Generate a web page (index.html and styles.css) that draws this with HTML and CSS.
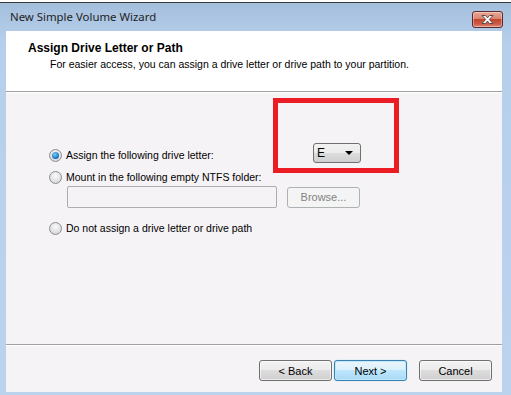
FILE: index.html
```html
<!DOCTYPE html>
<html lang="en">
<head>
  <meta charset="UTF-8">
  <meta name="viewport" content="width=device-width, initial-scale=1.0">
  <title>New Simple Volume Wizard</title>
  <link rel="stylesheet" href="styles.css">
</head>
<body>
  <div class="edge"></div>
  <div class="window">
    <div class="titlebar">
      <span class="title">New Simple Volume Wizard</span>
      <span class="close">
        <svg width="17" height="11" viewBox="0 0 17 11">
          <path d="M3 1.5h3.5l2 2.4 2-2.4H14l-3.7 4 3.7 4h-3.5l-2-2.4-2 2.4H3l3.7-4z" fill="#fff" stroke="#5a4a4a" stroke-width="1"/>
        </svg>
      </span>
    </div>
    <div class="client">
      <div class="header">
        <h1>Assign Drive Letter or Path</h1>
        <p>For easier access, you can assign a drive letter or drive path to your partition.</p>
      </div>
      <div class="body">
        <div class="row row-first">
          <label class="opt"><span class="radio checked"></span>Assign the following drive letter:</label>
          <div class="combo"><span>E</span><span class="arrow"></span></div>
        </div>
        <div class="row row-mount">
          <label class="opt"><span class="radio"></span>Mount in the following empty NTFS folder:</label>
        </div>
        <div class="row row-path">
          <div class="path"></div>
          <button class="btn" disabled>Browse...</button>
        </div>
        <div class="row row-none">
          <label class="opt"><span class="radio"></span>Do not assign a drive letter or drive path</label>
        </div>
        <div class="mark"></div>
      </div>
      <div class="footer">
        <button class="btn">&lt; Back</button>
        <button class="btn default">Next &gt;</button>
        <button class="btn cancel">Cancel</button>
      </div>
    </div>
  </div>
</body>
</html>
```

FILE: styles.css
```css
*{
  margin: 0;
  padding: 0;
  box-sizing: border-box;
}
body{
  width: 511px;
  height: 395px;
  overflow: hidden;
  background: #fff;
  font-family: "Liberation Sans", Arial, sans-serif;
  font-size: 10.5px;
  color: #000;
}
.edge{
  height: 4px;
  margin-top: -1px;
  background: #fff;
  border-bottom: 1px solid #3a3a3a;
}
.window{
  height: 392px;
  background: linear-gradient(#a4bfdd, #b6cfeb 40px, #bcd3ee);
  padding: 0 9px 3px 6px;
  display: flex;
  flex-direction: column;
}
.titlebar{
  height: 28px;
  display: flex;
  align-items: flex-start;
  justify-content: space-between;
}
.title{
  font-family: "Noto Sans", sans-serif;
  font-size: 11.4px;
  margin: 6px 0 0 4px;
  color: #1e1e1e;
}
.close{
  width: 31px;
  height: 17px;
  margin: 8px -1px 0 0;
  border: 1px solid #5b2a2e;
  border-radius: 3px;
  background: linear-gradient(#e8a897, #d9846f 45%, #c4462f 50%, #cc5a44 80%, #dc8e7a);
  display: flex;
  align-items: center;
  justify-content: center;
  box-shadow: inset 0 0 0 1px rgba(255,255,255,0.35);
}
.client{
  flex: 1;
  background: #f6f3f6;
  display: flex;
  flex-direction: column;
}
.header{
  height: 61px;
  background: #fff;
  border-bottom: 1px solid #a0a0a0;
  padding: 10px 0 0 22px;
  box-shadow: 0 1px 0 #fff;
}
.header h1{
  font-size: 12px;
  font-weight: bold;
  line-height: 14px;
}
.header p{
  margin: 2px 0 0 22px;
  line-height: 14px;
}
.body{
  position: relative;
  flex: 1;
  padding: 53px 0 0 43px;
  border-bottom: 1px solid #a0a0a0;
}
.row{
  display: flex;
  align-items: center;
}
.opt{
  display: flex;
  align-items: center;
  height: 20px;
}
.row-first .opt{
  width: 264px;
}
.row-mount{
  margin-top: 3px;
}
.row-mount .opt{
  height: 18px;
}
.row-path{
  padding-left: 18px;
}
.row-none{
  margin-top: 10px;
}
.radio{
  width: 13px;
  height: 13px;
  border-radius: 50%;
  border: 1px solid #8b8e92;
  background: radial-gradient(circle at 50% 35%, #fafafa, #e0e0e0 60%, #cfcfcf);
  margin-right: 4px;
  display: flex;
  align-items: center;
  justify-content: center;
}
.radio.checked::after{
  content: "";
  width: 7px;
  height: 7px;
  border-radius: 50%;
  background: radial-gradient(circle at 40% 35%, #7fd0f8, #1c7ac4 60%, #0c4f93);
}
.combo{
  width: 48px;
  height: 20px;
  margin-top: -4px;
  border: 1px solid #707070;
  border-radius: 3px;
  background: linear-gradient(#f2f2f2, #ebebeb 50%, #dddddd 50%, #cfcfcf);
  display: flex;
  align-items: center;
  justify-content: space-between;
  padding: 0 7px 0 3px;
  font-size: 12px;
}
.arrow{
  width: 0;
  height: 0;
  border-left: 4px solid transparent;
  border-right: 4px solid transparent;
  border-top: 4px solid #000;
}
.path{
  width: 210px;
  height: 22px;
  border: 1px solid #abadb3;
  border-radius: 2px;
  background: #f6f3f6;
}
.btn{
  width: 73px;
  height: 21px;
  border: 1px solid #707070;
  border-radius: 3px;
  background: linear-gradient(#f2f2f2, #ebebeb 50%, #dddddd 50%, #cfcfcf);
  font-family: "Liberation Sans", Arial, sans-serif;
  font-size: 11px;
  color: #000;
  box-shadow: inset 0 0 0 1px rgba(255,255,255,0.6);
}
.row-path .btn{
  margin-left: 10px;
}
.btn:disabled{
  border-color: #adb2b5;
  background: #f4f4f4;
  color: #838383;
  box-shadow: none;
}
.btn.default{
  border-color: #3c7fb1;
  background: linear-gradient(#eaf6fd, #d9f0fc 50%, #bee6fd 50%, #a7d9f5);
  box-shadow: inset 0 0 0 1px #bfe8f9, 0 0 1px #6cc2e8;
  margin-left: 2px;
}
.btn.cancel{
  margin-left: 12px;
}
.footer{
  height: 47px;
  border-top: 1px solid #fff;
  display: flex;
  justify-content: flex-end;
  align-items: flex-start;
  padding: 14px 10px 0 0;
}
.mark{
  position: absolute;
  left: 267px;
  top: 6px;
  width: 126px;
  height: 75px;
  border: 5px solid #ec1c24;
}
```
